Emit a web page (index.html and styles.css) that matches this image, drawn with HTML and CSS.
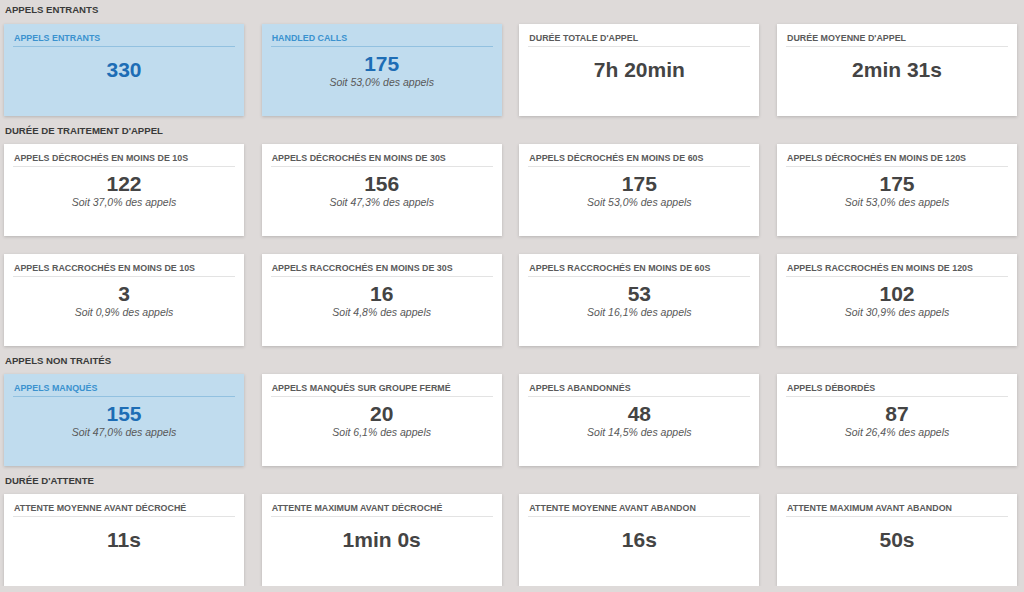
FILE: index.html
```html
<!DOCTYPE html>
<html lang="fr">
<head>
<meta charset="utf-8">
<title>Statistiques d'appels</title>
<link rel="stylesheet" href="styles.css">
</head>
<body>
<main class="dashboard">
  <section class="section">
    <h2 class="section-title">Appels entrants</h2>
    <div class="grid">
      <div class="card card--blue">
        <div class="card-title">Appels entrants</div>
        <div class="card-body"><div class="value">330</div></div>
      </div>
      <div class="card card--blue">
        <div class="card-title">Handled calls</div>
        <div class="card-body"><div class="value">175</div><div class="sub">Soit 53,0% des appels</div></div>
      </div>
      <div class="card">
        <div class="card-title">Durée totale d'appel</div>
        <div class="card-body"><div class="value">7h 20min</div></div>
      </div>
      <div class="card">
        <div class="card-title">Durée moyenne d'appel</div>
        <div class="card-body"><div class="value">2min 31s</div></div>
      </div>
    </div>
  </section>

  <section class="section">
    <h2 class="section-title">Durée de traitement d'appel</h2>
    <div class="grid">
      <div class="card">
        <div class="card-title">Appels décrochés en moins de 10s</div>
        <div class="card-body"><div class="value">122</div><div class="sub">Soit 37,0% des appels</div></div>
      </div>
      <div class="card">
        <div class="card-title">Appels décrochés en moins de 30s</div>
        <div class="card-body"><div class="value">156</div><div class="sub">Soit 47,3% des appels</div></div>
      </div>
      <div class="card">
        <div class="card-title">Appels décrochés en moins de 60s</div>
        <div class="card-body"><div class="value">175</div><div class="sub">Soit 53,0% des appels</div></div>
      </div>
      <div class="card">
        <div class="card-title">Appels décrochés en moins de 120s</div>
        <div class="card-body"><div class="value">175</div><div class="sub">Soit 53,0% des appels</div></div>
      </div>
      <div class="card">
        <div class="card-title">Appels raccrochés en moins de 10s</div>
        <div class="card-body"><div class="value">3</div><div class="sub">Soit 0,9% des appels</div></div>
      </div>
      <div class="card">
        <div class="card-title">Appels raccrochés en moins de 30s</div>
        <div class="card-body"><div class="value">16</div><div class="sub">Soit 4,8% des appels</div></div>
      </div>
      <div class="card">
        <div class="card-title">Appels raccrochés en moins de 60s</div>
        <div class="card-body"><div class="value">53</div><div class="sub">Soit 16,1% des appels</div></div>
      </div>
      <div class="card">
        <div class="card-title">Appels raccrochés en moins de 120s</div>
        <div class="card-body"><div class="value">102</div><div class="sub">Soit 30,9% des appels</div></div>
      </div>
    </div>
  </section>

  <section class="section">
    <h2 class="section-title">Appels non traités</h2>
    <div class="grid">
      <div class="card card--blue">
        <div class="card-title">Appels manqués</div>
        <div class="card-body"><div class="value">155</div><div class="sub">Soit 47,0% des appels</div></div>
      </div>
      <div class="card">
        <div class="card-title">Appels manqués sur groupe fermé</div>
        <div class="card-body"><div class="value">20</div><div class="sub">Soit 6,1% des appels</div></div>
      </div>
      <div class="card">
        <div class="card-title">Appels abandonnés</div>
        <div class="card-body"><div class="value">48</div><div class="sub">Soit 14,5% des appels</div></div>
      </div>
      <div class="card">
        <div class="card-title">Appels débordés</div>
        <div class="card-body"><div class="value">87</div><div class="sub">Soit 26,4% des appels</div></div>
      </div>
    </div>
  </section>

  <section class="section">
    <h2 class="section-title">Durée d'attente</h2>
    <div class="grid">
      <div class="card">
        <div class="card-title">Attente moyenne avant décroché</div>
        <div class="card-body"><div class="value">11s</div></div>
      </div>
      <div class="card">
        <div class="card-title">Attente maximum avant décroché</div>
        <div class="card-body"><div class="value">1min 0s</div></div>
      </div>
      <div class="card">
        <div class="card-title">Attente moyenne avant abandon</div>
        <div class="card-body"><div class="value">16s</div></div>
      </div>
      <div class="card">
        <div class="card-title">Attente maximum avant abandon</div>
        <div class="card-body"><div class="value">50s</div></div>
      </div>
    </div>
  </section>
</main>
</body>
</html>
```

FILE: styles.css
```css
* {
  box-sizing: border-box;
}

html,
body {
  margin: 0;
  padding: 0;
  background: #dedad9;
}

body {
  font-family: "Liberation Sans", Arial, Helvetica, sans-serif;
  color: #444;
  overflow: hidden;
}

.dashboard {
  padding: 0 7px 0 4px;
}

.section-title {
  margin: 0;
  padding: 8px 0 6px 1px;
  font-size: 9.6px;
  line-height: 14px;
  font-weight: bold;
  text-transform: uppercase;
  color: #3a3a3a;
}

.section:first-child .section-title {
  padding-top: 3px;
  padding-bottom: 7px;
}

.grid {
  display: grid;
  grid-template-columns: repeat(4, 1fr);
  gap: 18px 17.7px;
}

/* Stat card */
.card {
  height: 92px;
  padding: 0 9px;
  background: #fff;
  box-shadow: 0 1px 3px rgba(0, 0, 0, 0.18);
}

.card--blue {
  background: #c0dcee;
}

.card-title {
  padding: 9px 0 3px 1px;
  font-size: 8.9px;
  line-height: 10px;
  font-weight: bold;
  text-transform: uppercase;
  color: #5a5a5a;
  border-bottom: 1px solid #e3e3e3;
  white-space: nowrap;
}

.card--blue .card-title {
  color: #3b92cf;
  border-bottom-color: #92c1e0;
}

.card-body {
  height: 46px;
  display: flex;
  flex-direction: column;
  justify-content: center;
  align-items: center;
}

.value {
  font-size: 21px;
  line-height: 24px;
  font-weight: bold;
  color: #444;
}

.card--blue .value {
  color: #1d6db5;
}

.sub {
  font-size: 10.5px;
  line-height: 13px;
  font-style: italic;
  color: #585858;
}
```
